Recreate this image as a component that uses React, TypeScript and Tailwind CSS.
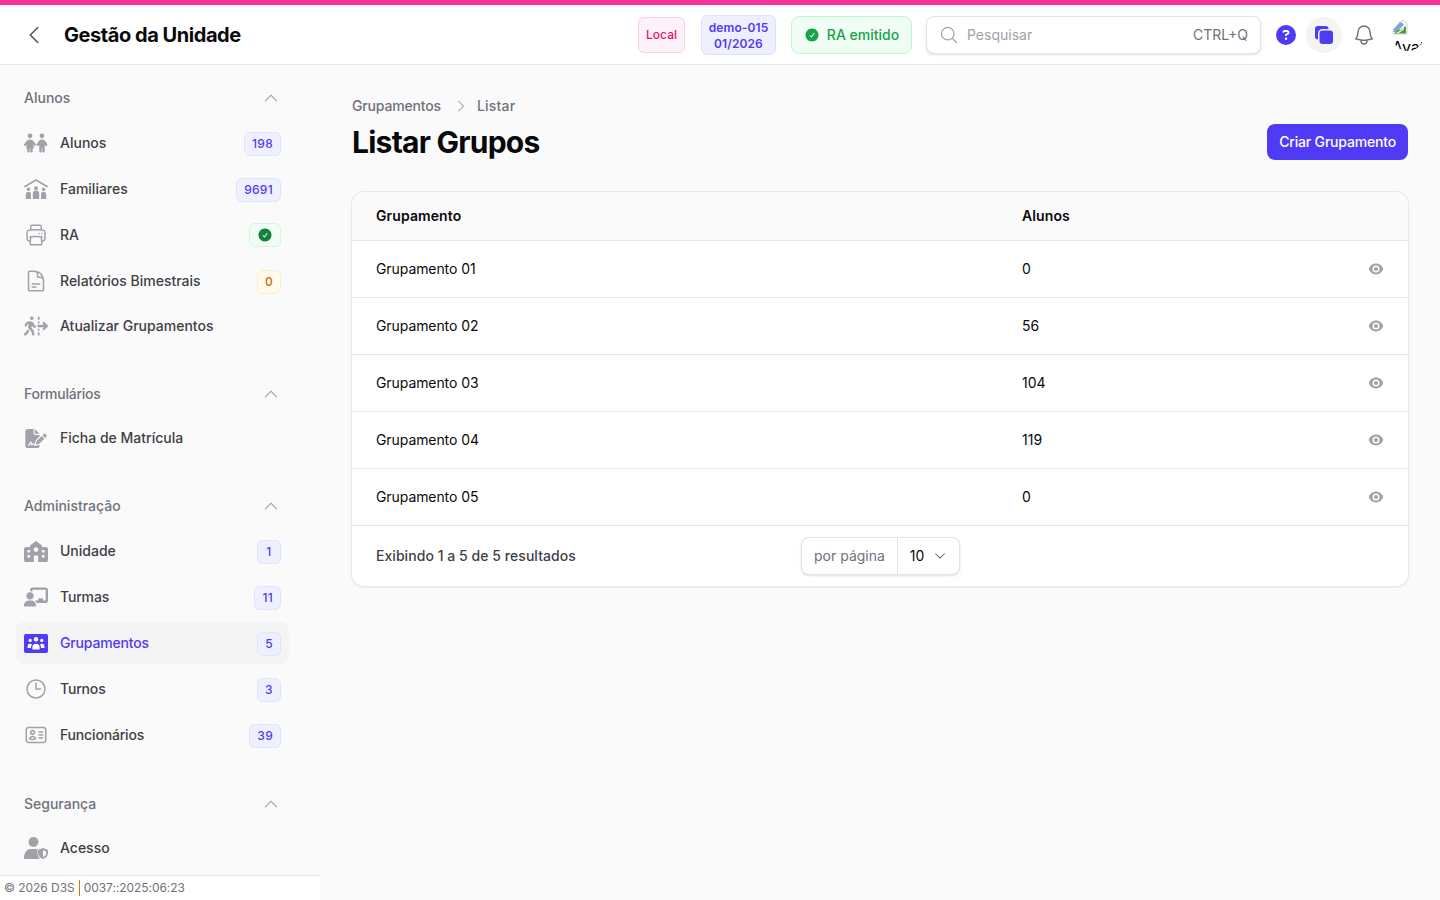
import { clsx } from "clsx"
import type { ReactNode } from "react"
import {
    FaChildren,
    FaPersonWalkingDashedLineArrowRight,
    FaFileSignature,
    FaChalkboardUser,
    FaCircleQuestion,
} from "react-icons/fa6"
import {
    HiOutlinePrinter,
    HiOutlineDocumentText,
    HiOutlineClock,
    HiOutlineIdentification,
    HiOutlineMagnifyingGlass,
    HiOutlineBell,
    HiSquare2Stack,
    HiCheckCircle,
    HiEye,
    HiChevronUp,
    HiChevronDown,
    HiChevronLeft,
    HiChevronRight,
} from "react-icons/hi2"

type Tone = "indigo" | "amber" | "green"

interface Item {
    label: string
    icon: ReactNode
    badge?: string
    tone?: Tone
    active?: boolean
    tight?: boolean
}

const iconCls = "h-6 w-6 text-[#a1a1aa]"

function FamilyIcon() {
    return (
        <svg viewBox="0 0 24 20" className="h-5 w-6 text-[#a1a1aa]" fill="currentColor">
            <path d="M1 7.5 12 1l11 6.5" fill="none" stroke="currentColor" strokeWidth="1.6" strokeLinecap="round" strokeLinejoin="round" />
            <circle cx="4.4" cy="10.2" r="1.7" />
            <circle cx="12" cy="9.2" r="2" />
            <circle cx="19.6" cy="10.2" r="1.7" />
            <path d="M1.8 20v-4.6a2.6 2.6 0 0 1 5.2 0V20z" />
            <path d="M8.8 20v-5.2a3.2 3.2 0 0 1 6.4 0V20z" />
            <path d="M17 20v-4.6a2.6 2.6 0 0 1 5.2 0V20z" />
        </svg>
    )
}

function SchoolIcon() {
    return (
        <svg viewBox="0 0 24 21" className="h-[21px] w-6 text-[#a1a1aa]" fill="currentColor">
            <path d="M12 0l6 4.6V6h4a2 2 0 0 1 2 2v11a2 2 0 0 1-2 2H2a2 2 0 0 1-2-2V8a2 2 0 0 1 2-2h4V4.6z" />
            <g fill="#fafafa">
                <rect x="3.5" y="9" width="2.6" height="2.6" rx="0.6" />
                <rect x="3.5" y="14" width="2.6" height="2.6" rx="0.6" />
                <rect x="17.9" y="9" width="2.6" height="2.6" rx="0.6" />
                <rect x="17.9" y="14" width="2.6" height="2.6" rx="0.6" />
                <circle cx="12" cy="8.6" r="2.3" />
                <rect x="9.8" y="14.4" width="4.4" height="6.6" rx="0.6" />
            </g>
        </svg>
    )
}

function UsersRectIcon() {
    return (
        <svg viewBox="0 0 24 19" className="h-[19px] w-6">
            <rect width="24" height="19" rx="2" fill="#4f3af6" />
            <g fill="#fff">
                <circle cx="12" cy="5.2" r="2.2" />
                <circle cx="6.2" cy="6.4" r="1.6" />
                <circle cx="17.8" cy="6.4" r="1.6" />
                <path d="M8.4 15.5v-2.2a3.6 3.6 0 0 1 7.2 0v2.2z" />
                <path d="M3.6 14v-2a2.6 2.6 0 0 1 4.4-1.6 5 5 0 0 0-1 3V14z" />
                <path d="M20.4 14v-2a2.6 2.6 0 0 0-4.4-1.6 5 5 0 0 1 1 3V14z" />
            </g>
        </svg>
    )
}

function UserShieldIcon() {
    return (
        <svg viewBox="0 0 24 22" className="h-[22px] w-6 text-[#a1a1aa]" fill="currentColor">
            <circle cx="9.5" cy="5" r="5" />
            <path d="M6.5 12h6a6 6 0 0 1 1 .1v3.4c0 2.4.8 4.6 2.4 6.5H1a1 1 0 0 1-1-1C0 16.5 2.5 12 6.5 12z" />
            <path d="M19 11l5 2v3c0 2.8-2 5-5 6-3-1-5-3.2-5-6v-3z" />
            <path d="M19 13.2l3.2 1.3V16c0 1.8-1.200 3.3-3.2 4.1z" fill="#fafafa" />
        </svg>
    )
}

const groups: { title: string; tight?: boolean; items: Item[] }[] = [
    {
        title: "Alunos",
        items: [
            { label: "Alunos", icon: <FaChildren className={iconCls} />, badge: "198", tone: "indigo" },
            { label: "Familiares", icon: <FamilyIcon />, badge: "9691", tone: "indigo" },
            { label: "RA", icon: <HiOutlinePrinter className={iconCls} />, badge: "check", tone: "green" },
            { label: "Relatórios Bimestrais", icon: <HiOutlineDocumentText className={iconCls} />, badge: "0", tone: "amber" },
            { label: "Atualizar Grupamentos", icon: <FaPersonWalkingDashedLineArrowRight className={iconCls} /> },
        ],
    },
    {
        title: "Formulários",
        tight: true,
        items: [{ label: "Ficha de Matrícula", icon: <FaFileSignature className="h-[19px] w-6 text-[#a1a1aa]" /> }],
    },
    {
        title: "Administração",
        items: [
            { label: "Unidade", icon: <SchoolIcon />, badge: "1", tone: "indigo" },
            { label: "Turmas", icon: <FaChalkboardUser className={iconCls} />, badge: "11", tone: "indigo", tight: true },
            { label: "Grupamentos", icon: <UsersRectIcon />, badge: "5", tone: "indigo", active: true, tight: true },
            { label: "Turnos", icon: <HiOutlineClock className={iconCls} />, badge: "3", tone: "indigo", tight: true },
            { label: "Funcionários", icon: <HiOutlineIdentification className={iconCls} />, badge: "39", tone: "indigo", tight: true },
        ],
    },
    {
        title: "Segurança",
        items: [{ label: "Acesso", icon: <UserShieldIcon /> }],
    },
]

const rows = [
    ["Grupamento 01", "0"],
    ["Grupamento 02", "56"],
    ["Grupamento 03", "104"],
    ["Grupamento 04", "119"],
    ["Grupamento 05", "0"],
]

function Badge({ value, tone }: { value: string; tone: Tone }) {
    return (
        <span
            className={clsx(
                "flex h-6 min-w-6 items-center justify-center rounded-md border px-[7px] text-xs font-medium tracking-[0.3px]",
                value !== "check" && "mt-0.5",
                tone === "indigo" && "border-[#e0e3fd] bg-[#eff0fe] text-[#4f3af6]",
                tone === "amber" && "border-[#fdeccf] bg-[#fffaeb] text-[#d9650b]",
                tone === "green" && "border-[#d5f5e1] bg-[#f0fdf4] text-[#15803d]",
            )}
        >
            {value === "check" ? <HiCheckCircle className="h-4 w-4 text-[#15803d]" /> : value}
        </span>
    )
}

function NavItem({ item }: { item: Item }) {
    return (
        <a
            className={clsx(
                "flex items-center gap-3 rounded-lg px-2",
                item.badge ? "h-[42px]" : "h-10",
                item.active && "bg-[#f4f4f5]",
            )}
        >
            {item.icon}
            <span
                className={clsx(
                    "flex-1 text-sm font-medium",
                    item.active ? "text-[#4f3af6]" : "text-[#3f3f46]",
                    item.tight && "tracking-[-0.17px]",
                )}
            >
                {item.label}
            </span>
            {item.badge && <Badge value={item.badge} tone={item.tone ?? "indigo"} />}
        </a>
    )
}

function Sidebar() {
    return (
        <aside className="relative flex h-[835px] w-[320px] shrink-0 flex-col overflow-hidden">
            <nav className="flex flex-col gap-[38px] pl-4 pr-[31px] pt-[23px]">
                {groups.map((g) => (
                    <div key={g.title} className="flex flex-col gap-1">
                        <div className="mb-[10px] flex h-[20px] items-center justify-between px-2">
                            <span className={clsx("text-sm font-medium text-[#71717a]", g.tight && "tracking-[-0.25px]")}>{g.title}</span>
                            <HiChevronUp className="mr-px -mt-px h-[18px] w-[18px] text-[#a1a1aa]" />
                        </div>
                        {g.items.map((item) => (
                            <NavItem key={item.label} item={item} />
                        ))}
                    </div>
                ))}
            </nav>
            <footer className="absolute bottom-0 left-0 flex h-[25px] w-[321px] items-center border-t border-r border-[#e5e7eb] bg-white pl-1 text-xs tracking-[-0.05px] text-[#71717a]">
                © 2026 D3S
                <span className="mx-1 h-4 w-px bg-[#d97706]" />
                0037::2025:06:23
            </footer>
        </aside>
    )
}

function Header() {
    return (
        <header className="flex h-[60px] items-center border-b border-[#e5e7eb] bg-white pl-6 pr-4">
            <HiChevronLeft className="-ml-0.5 h-6 w-6 text-[#52525b]" />
            <h1 className="ml-[18px] text-xl font-bold tracking-[-0.45px] text-[#09090b]">Gestão da Unidade</h1>
            <div className="ml-auto flex items-center">
                <span className="flex h-[36px] items-center rounded-md border border-[#fbcfe8] bg-[#fdf2f8] px-[7px] text-xs font-medium text-[#e5106f]">
                    Local
                </span>
                <span className="ml-4 mt-px flex h-10 w-[75px] flex-col items-center justify-center rounded-md border border-[#dfe2fb] bg-[#eff0fe] pt-0.5 text-xs font-semibold leading-4 tracking-[0.1px] text-[#4f3af6]">
                    <span>demo-015</span>
                    <span>01/2026</span>
                </span>
                <span className="ml-[15px] flex h-[38px] w-[121px] items-center justify-center gap-[7px] rounded-lg border border-[#bbf7d0] bg-[#f0fdf4] text-sm font-medium text-[#16a34a]">
                    <HiCheckCircle className="h-4 w-4 text-[#16a34a]" />
                    RA emitido
                </span>
                <div className="ml-[14px] flex h-[38px] w-[335px] items-center rounded-lg border border-[#e4e4e7] bg-white pl-3 pr-3 shadow-sm">
                    <HiOutlineMagnifyingGlass className="h-5 w-5 text-[#a1a1aa]" />
                    <span className="ml-2 flex-1 text-sm text-[#a1a1aa]">Pesquisar</span>
                    <span className="text-sm text-[#71717a]">CTRL+Q</span>
                </div>
                <FaCircleQuestion className="ml-[15px] h-5 w-5 text-[#4f3af6]" />
                <span className="ml-[10px] flex h-9 w-9 items-center justify-center rounded-full bg-[#f4f4f5]">
                    <HiSquare2Stack className="h-6 w-6 text-[#4f3af6]" />
                </span>
                <HiOutlineBell className="ml-[10px] h-6 w-6 text-[#71717a]" />
                <Avatar />
            </div>
        </header>
    )
}

// imagem quebrada + alt cortado pelo circulo
function Avatar() {
    return (
        <div className="ml-4 h-8 w-8 overflow-hidden rounded-full text-base leading-6 text-black">
            <svg viewBox="0 0 16 16" className="h-4 w-4">
                <path d="M1 3h8l2-2 4 4v10H1z" fill="#fff" stroke="#c4c4c4" strokeWidth="0.8" />
                <path d="M1.5 10 7.5 3.5h2.5l2 2L5 13H1.5z" fill="#7ea6dd" />
                <path d="M2 14.5 6 11l3-.5 5-3.5v7.5z" fill="#4a9c34" />
                <path d="M4 14l5-3 3-2.5v2L7 14z" fill="#dff0d4" />
            </svg>
            Avatar
        </div>
    )
}

function GroupsTable() {
    return (
        <div className="overflow-hidden rounded-xl bg-white shadow-sm ring-1 ring-[#e8e8ea]">
            <div className="flex h-[49px] items-center border-b border-[#e5e7eb] bg-[#fafafa] px-6 text-sm font-semibold tracking-[0.1px] text-[#09090b]">
                <span className="w-[646px]">Grupamento</span>
                <span>Alunos</span>
            </div>
            {rows.map(([name, count]) => (
                <div key={name} className="flex h-[57px] items-center border-b border-[#e5e7eb] px-6 text-sm text-[#09090b]">
                    <span className="w-[646px] tracking-[-0.08px]">{name}</span>
                    <span className="flex-1">{count}</span>
                    <HiEye className="h-4 w-4 text-[#a1a1aa]" />
                </div>
            ))}
            <div className="flex h-[60px] items-center px-6">
                <span className="w-[425px] text-sm font-medium tracking-[0.05px] text-[#3f3f46]">Exibindo 1 a 5 de 5 resultados</span>
                <div className="flex h-[38px] items-center rounded-lg border border-[#e4e4e7] bg-white text-sm shadow-sm">
                    <span className="flex h-full items-center border-r border-[#e4e4e7] px-3 text-[#71717a]">por página</span>
                    <span className="flex items-center gap-[9px] pl-3 pr-3 text-[#09090b]">
                        10
                        <HiChevronDown className="h-3.5 w-3.5 text-[#52525b]" />
                    </span>
                </div>
            </div>
        </div>
    )
}

export default function App() {
    return (
        <div className="h-[900px] overflow-hidden border-t-[5px] border-[#f9329a] bg-[#fafafa] font-['Inter',sans-serif]">
            <Header />
            <div className="flex">
                <Sidebar />
                <main className="flex-1 pl-8 pr-8 pt-[31px]">
                    <nav className="flex items-center text-sm font-medium text-[#71717a]">
                        <span className="tracking-[-0.17px]">Grupamentos</span>
                        <HiChevronRight className="ml-3 mr-2 h-4 w-4 text-[#a1a1aa]" />
                        <span className="tracking-[0.2px]">Listar</span>
                    </nav>
                    <div className="mb-8 mt-2 flex items-center justify-between">
                        <h2 className="text-3xl font-bold tracking-tight text-[#09090b]">Listar Grupos</h2>
                        <button className="flex h-9 items-center rounded-lg bg-[#4f3af6] px-3 text-sm font-medium tracking-[-0.18px] text-white">
                            Criar Grupamento
                        </button>
                    </div>
                    <GroupsTable />
                </main>
            </div>
        </div>
    )
}
